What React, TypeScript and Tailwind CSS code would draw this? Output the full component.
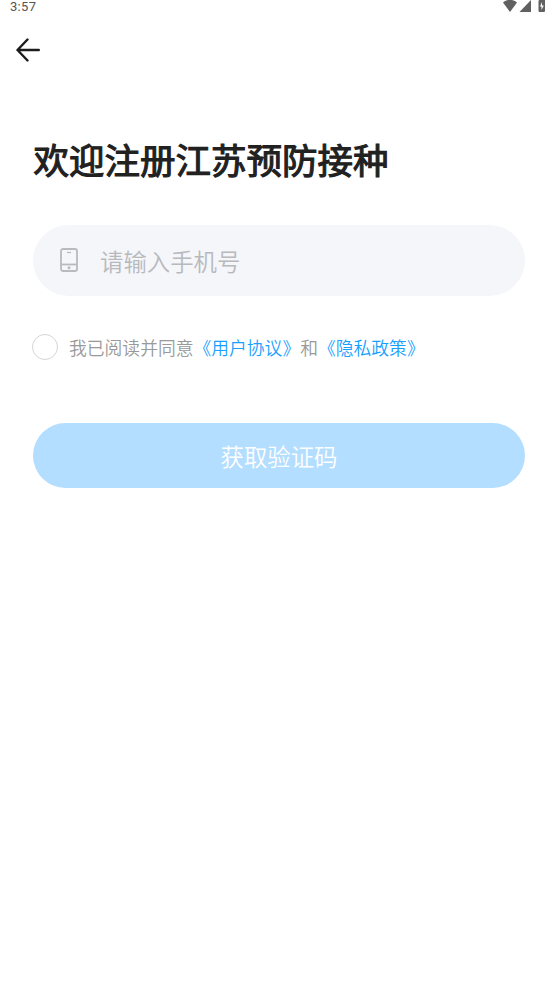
import { useState } from 'react'

function StatusBar() {
  return (
    <div className="flex h-[14px] items-start justify-between pl-[10px] pr-[10px]">
      <span className="font-[Roboto,sans-serif] text-[13px] leading-[14px] tracking-[0.3px] text-[#555]">3:57</span>
      <svg width="43" height="14" viewBox="0 0 43 14" fill="#606060">
        <path d="M0 2.500C4.400-1 9.600-1 14 2.500L7 12Z" />
        <path d="M28 0V12H16.500Z" />
        <path d="M36 0h6v11q0 1-1 1h-4.500q-1 0-1-1V1q0-1 1-1z" />
        <path d="M39 2L37 6.500H38.500V10L40.800 5.500H39Z" fill="#fff" />
      </svg>
    </div>
  )
}

export default function App() {
  const [phone, setPhone] = useState('')
  const [agreed, setAgreed] = useState(false)

  return (
    <div className="h-[988px] w-[556px] overflow-hidden bg-white font-['Noto_Sans_CJK_SC',sans-serif]">
      <StatusBar />

      <header className="flex h-[72px] items-center pl-4">
        <button aria-label="返回">
          <svg width="24" height="24" viewBox="0 0 24 24" fill="none" stroke="#1c1c1c" strokeWidth="2.400" strokeLinecap="round" strokeLinejoin="round">
            <path d="M11.500 1.500L1.500 12L11.500 22.500M1.500 12H22.800" />
          </svg>
        </button>
      </header>

      <main className="pl-[33px] pr-[31px]">
        <h1 className="mt-[47px] pl-[0.5px] text-[35.500px] font-normal leading-[52px] text-[#212121] [-webkit-text-stroke:1.100px_#212121]">欢迎注册江苏预防接种</h1>

        <label className="mt-[40px] flex h-[71px] items-center rounded-full bg-[#f4f6fa] pl-[27px]">
          <svg className="-mt-0.5" width="18" height="24" viewBox="0 0 18 24" fill="none" stroke="#b9babd" strokeWidth="1.800">
            <rect x="1" y="1" width="16" height="22" rx="2" />
            <path d="M7 4.500h4" strokeWidth="1.200" />
            <path d="M1 16.500h16" />
            <circle cx="9" cy="19.700" r="1.500" fill="#b9babd" stroke="none" />
          </svg>
          <input
            value={phone}
            onChange={(e) => setPhone(e.target.value)}
            placeholder="请输入手机号"
            className="ml-[22px] mt-0.5 w-[380px] bg-transparent text-[23.400px] text-[#333] outline-none placeholder:font-[350] placeholder:text-[#b8b9bd]"
          />
        </label>

        <div className="-ml-px mt-[38px] flex h-[26px] items-center">
          <button
            onClick={() => setAgreed(!agreed)}
            aria-label="同意协议"
            className={`size-[26px] rounded-full border border-[#d5d5d5] ${agreed ? 'bg-[#1a9ff5]' : 'bg-white'}`}
          />
          <p className="-mt-px ml-[11px] whitespace-nowrap text-[17.800px] font-[350] leading-[26px] text-[#999]">
            我已阅读并同意<a className="text-[#1a9fff]">《用户协议》</a>和<a className="text-[#1a9fff]">《隐私政策》</a>
          </p>
        </div>

        <button className="mt-[63px] h-[65px] w-full rounded-full bg-[#b3deff] pt-0.5 text-[23.400px] font-[350] text-white">获取验证码</button>
      </main>
    </div>
  )
}
